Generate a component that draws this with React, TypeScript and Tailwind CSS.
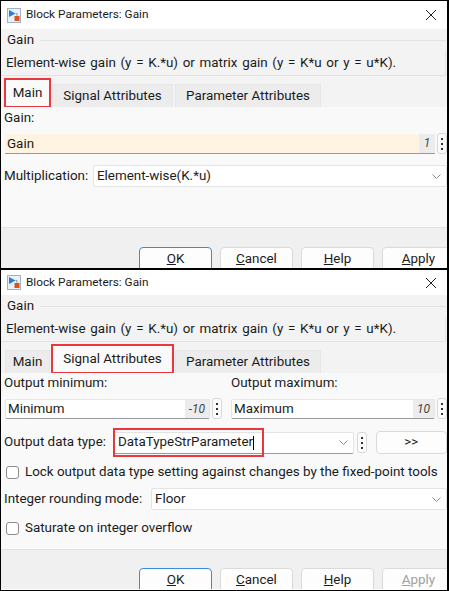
import React from 'react';

// Small block icon drawn next to the dialog title
function BlockIcon() {
    return (
        <svg width="14" height="15" viewBox="0 0 14 15">
            <rect x="0.5" y="0.5" width="13" height="14" fill="#e9f0f8" stroke="#9fb3c8" />
            <path d="M2 2 L8.5 5.5 L2 9 Z" fill="#2b7dd6" />
            <path d="M8.5 5.5 H10 V8" stroke="#7a8a9a" strokeWidth="0.8" fill="none" />
            <rect x="7.5" y="8" width="5" height="5" fill="#e0521c" />
        </svg>
    );
}

function CloseIcon() {
    return (
        <svg width="12" height="12" viewBox="0 0 12 12">
            <path d="M1 1 L11 11 M11 1 L1 11" stroke="#222" strokeWidth="1" />
        </svg>
    );
}

function Chevron() {
    return (
        <svg width="9" height="5" viewBox="0 0 9 5">
            <path d="M0.5 0.5 L4.5 4.5 L8.5 0.5" stroke="#8a8a8a" strokeWidth="1" fill="none" />
        </svg>
    );
}

function Kebab() {
    return (
        <div className="shrink-0 w-[10px] h-[21px] flex flex-col items-center justify-center gap-[3px] border border-[#d8d8d8] rounded-[3px] bg-[#fbfbfb]">
            <span className="w-[2px] h-[2px] bg-[#333]" />
            <span className="w-[2px] h-[2px] bg-[#333]" />
            <span className="w-[2px] h-[2px] bg-[#333]" />
        </div>
    );
}

function TitleBar({ h }: { h: string }) {
    return (
        <div className={`shrink-0 flex items-center bg-white pl-[6px] pr-[10px] ${h}`}>
            <BlockIcon />
            <span className="ml-[5px] text-[11.8px] text-[#1b1b1b]">Block Parameters: Gain</span>
            <div className="ml-auto">
                <CloseIcon />
            </div>
        </div>
    );
}

function GainGroup() {
    return (
        <div className="shrink-0 pr-[1px]">
            <div className="flex items-center h-[22px]">
                <span className="pl-[6px] pr-[6px]">Gain</span>
                <div className="flex-1 h-px bg-[#e2e2e2]" />
            </div>
            <div className="h-[25px] flex items-center pl-[5px] border-r border-b border-[#e2e2e2] [word-spacing:1.4px]">
                Element-wise gain (y = K.*u) or matrix gain (y = K*u or y = u*K).
            </div>
        </div>
    );
}

function Tabs({ active }: { active: number }) {
    const tabs = ['Main', 'Signal Attributes', 'Parameter Attributes'];
    const widths = ['w-[45px]', 'w-[121px]', 'w-[146px]'];
    return (
        <div className="shrink-0 flex items-end h-[31px] pl-[4px] gap-[2px]">
            {tabs.map((t, i) =>
                i === active ? (
                    <div
                        key={t}
                        className={`${widths[i]} h-[28px] flex items-center justify-center bg-[#fafafa] border border-b-0 border-[#e4e4e4] outline-2 outline-[#e8383d] outline-offset-[-1px]`}
                    >
                        {t}
                    </div>
                ) : (
                    <div
                        key={t}
                        className={`${widths[i]} h-[23px] flex items-center justify-center bg-[#ececec] border border-b-0 border-[#e6e6e6]`}
                    >
                        {t}
                    </div>
                )
            )}
        </div>
    );
}

function ValueField({ placeholder, value }: { placeholder: string; value: string }) {
    return (
        <div className="flex items-center gap-[2px]">
            <div className="flex-1 h-[20px] flex bg-white border border-[#e6e6e6] border-b-[#9a9a9a] rounded-[2px]">
                <span className="flex-1 pl-[2px] leading-[18px]">{placeholder}</span>
                <span className="px-[4px] bg-[#ececec] text-[12px] italic leading-[18px] text-[#444]">{value}</span>
            </div>
            <Kebab />
        </div>
    );
}

function Select({ value, w }: { value: string; w: string }) {
    return (
        <div className={`${w} h-[22px] flex items-center bg-white border border-[#e4e4e4] rounded-[2px] pl-[3px] pr-[5px]`}>
            <span>{value}</span>
            <div className="ml-auto">
                <Chevron />
            </div>
        </div>
    );
}

function Checkbox({ label }: { label: string }) {
    return (
        <div className="flex items-center h-[22px] pl-[2px]">
            <div className="shrink-0 w-[13px] h-[13px] border border-[#8c8c8c] rounded-[3px] bg-white" />
            <span className="ml-[6px]">{label}</span>
        </div>
    );
}

function Buttons({ applyDisabled }: { applyDisabled?: boolean }) {
    return (
        <div className="flex gap-[8px] pl-[138px] overflow-hidden">
            <button className="shrink-0 w-[73px] h-[25px] bg-[#fdfdfd] border border-[#3c8ad8] rounded-[4px]">
                <u>O</u>K
            </button>
            <button className="shrink-0 w-[73px] h-[25px] bg-[#fdfdfd] border border-[#dadada] rounded-[4px]">
                <u>C</u>ancel
            </button>
            <button className="shrink-0 w-[73px] h-[25px] bg-[#fdfdfd] border border-[#dadada] rounded-[4px]">
                <u>H</u>elp
            </button>
            <button
                className={`shrink-0 w-[73px] h-[25px] bg-[#fdfdfd] border border-[#dadada] rounded-[4px] ${applyDisabled ? 'text-[#a0a0a0]' : ''}`}
            >
                <u>A</u>pply
            </button>
        </div>
    );
}

function MainDialog() {
    return (
        <div className="shrink-0 h-[267px] flex flex-col overflow-hidden bg-[#f3f3f3]">
            <TitleBar h="h-[28px]" />
            <GainGroup />
            <Tabs active={0} />
            {/* タブの中身 */}
            <div className="shrink-0 flex flex-col bg-[#f9f9f9] pl-[3px] pt-[1px] h-[120px]">
                <div className="h-[20px] flex items-center">Gain:</div>
                <div className="mt-[5px] flex items-center gap-[2px] pl-[1px]">
                    <div className="flex-1 h-[20px] flex bg-[#fff3e1] border-b border-[#9a9a9a]">
                        <span className="flex-1 pl-[2px] leading-[19px]">Gain</span>
                        <span className="w-[16px] text-center bg-[#ececec] text-[12px] italic leading-[19px] text-[#444]">1</span>
                    </div>
                    <Kebab />
                </div>
                <div className="mt-[11px] flex items-center">
                    <span className="w-[89px]">Multiplication:</span>
                    <Select value="Element-wise(K.*u)" w="flex-1" />
                </div>
            </div>
            <div className="flex-1 min-h-0 border-t border-[#e2e2e2] bg-[#f0f0f0] pt-[19px]">
                <Buttons />
            </div>
        </div>
    );
}

function SignalDialog() {
    return (
        <div className="shrink-0 h-[319px] flex flex-col overflow-hidden bg-[#f3f3f3]">
            <TitleBar h="h-[25px]" />
            <GainGroup />
            <Tabs active={1} />
            {/* Signal Attributes タブ */}
            <div className="shrink-0 flex flex-col bg-[#f9f9f9] pl-[3px] pt-[1px] h-[176px]">
                <div className="flex gap-[8px]">
                    <div className="w-[218px] flex flex-col">
                        <div className="h-[18px] flex items-center">Output minimum:</div>
                        <div className="mt-[6px] pl-[1px]">
                            <ValueField placeholder="Minimum" value="-10" />
                        </div>
                    </div>
                    <div className="flex-1 flex flex-col">
                        <div className="h-[18px] flex items-center pl-[1px]">Output maximum:</div>
                        <div className="mt-[6px] pl-[1px]">
                            <ValueField placeholder="Maximum" value="10" />
                        </div>
                    </div>
                </div>
                <div className="mt-[12px] flex items-center">
                    <span className="w-[110px]">Output data type:</span>
                    <div className="w-[243px] h-[22px] flex items-center bg-white border border-[#e4e4e4] border-b-[#9a9a9a] rounded-[2px] pl-[3px] pr-[5px]">
                        <span className="inline-flex items-center h-[21px] w-[143px] pl-[1px] outline-2 outline-[#e8383d] outline-offset-[2px]">
                            DataTypeStrParameter<span className="inline-block w-px h-[14px] bg-black" />
                        </span>
                        <div className="ml-auto">
                            <Chevron />
                        </div>
                    </div>
                    <div className="ml-[3px]">
                        <Kebab />
                    </div>
                    <button className="ml-[9px] w-[72px] h-[23px] bg-[#fdfdfd] border border-[#dadada] rounded-[4px]">
                        &gt;&gt;
                    </button>
                </div>
                <div className="mt-[7px]">
                    <Checkbox label="Lock output data type setting against changes by the fixed-point tools" />
                </div>
                <div className="mt-[5px] flex items-center">
                    <span className="w-[147px]">Integer rounding mode:</span>
                    <Select value="Floor" w="flex-1" />
                </div>
                <div className="mt-[7px]">
                    <Checkbox label="Saturate on integer overflow" />
                </div>
            </div>
            <div className="flex-1 min-h-0 border-t border-[#e2e2e2] bg-[#f0f0f0] pt-[18px]">
                <Buttons applyDisabled />
            </div>
        </div>
    );
}

export default function App() {
    return (
        <div className="w-[449px] h-[591px] flex flex-col border-l border-t border-b border-r-2 border-black bg-white text-[#1b1b1b] text-[13.4px] whitespace-nowrap font-['Roboto','Noto_Sans',sans-serif] overflow-hidden">
            <MainDialog />
            <div className="shrink-0 h-[2px] bg-black" />
            <SignalDialog />
        </div>
    );
}
